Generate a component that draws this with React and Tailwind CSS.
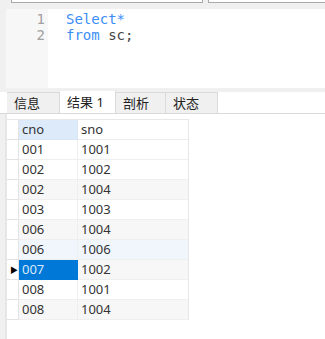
import React from "react";

const ROWS = [
  ["001", "1001"],
  ["002", "1002"],
  ["002", "1004"],
  ["003", "1003"],
  ["006", "1004"],
  ["006", "1006"],
  ["007", "1002"],
  ["008", "1001"],
  ["008", "1004"],
];

const TABS = [
  { label: "信息", width: "w-[53px]" },
  { label: "结果 1", width: "w-[56px]", active: true },
  { label: "剖析", width: "w-[50px]" },
  { label: "状态", width: "w-[52px]" },
];

function rowBg(index) {
  if (index === 5) return "bg-[#f1f6fc]";
  if (index > 0 && index % 2 === 0) return "bg-[#f7f7f7]";
  return "bg-white";
}

export default function App() {
  return (
    <div className="flex h-[339px] w-[325px] flex-col overflow-hidden bg-[#f0f0f0] font-['Noto_Sans','Noto_Sans_CJK_SC',sans-serif]">
      {/* toolbar remnants */}
      <div className="flex h-[9px] shrink-0 gap-[5px] pl-[11px]">
        <div className="h-[3px] w-[192px] border-x border-b border-[#a9a9a9] bg-white" />
        <div className="h-[3px] flex-1 border-l border-b border-[#a9a9a9] bg-white" />
      </div>

      {/* editor */}
      <div className="ml-[6px] flex h-[79px] shrink-0 font-['DejaVu_Sans_Mono',monospace] text-[14px] leading-[16px]">
        <div className="w-[42px] bg-[#f7f7f7] pt-[2px] pr-[3px] text-right text-[#a0a0a0]">
          <div>1</div>
          <div>2</div>
        </div>
        <div className="flex-1 bg-white pt-[2px] pl-[18px]">
          <div className="text-[#3a8ef6]">Select*</div>
          <div>
            <span className="text-[#3a8ef6]">from</span>
            <span className="text-[#444]"> sc;</span>
          </div>
        </div>
      </div>

      {/* result tabs */}
      <div className="mt-[4px] flex h-[22px] shrink-0 items-end border-b border-[#d9d9d9] bg-white pl-[7px]">
        {TABS.map((tab) => (
          <div
            key={tab.label}
            className={`${tab.width} flex items-center border-r border-[#dadada] pl-[7px] text-[13px] leading-none text-[#222] ${
              tab.active ? "h-[22px] bg-white" : "h-[21px] bg-[#f0f0f0] border-t"
            }`}
          >
            {tab.label}
          </div>
        ))}
      </div>

      {/* grid */}
      <div className="ml-[5px] flex-1 border-l-2 border-[#e6e6e6] bg-white pt-[5px]">
        <div className="w-[182px] border-t border-r border-[#e8e8e8] text-[13px] leading-none text-[#333]">
          <div className="flex h-[20px]">
            <div className="w-[12px] border-r border-b border-[#e3e3e3] bg-white" />
            <div className="flex w-[59px] items-center border-r border-b border-[#d9e5f2] bg-[#dceafa] pl-[3px]">cno</div>
            <div className="flex flex-1 items-center border-b border-[#ececec] pl-[3px]">sno</div>
          </div>
          {ROWS.map(([cno, sno], i) => {
            const selected = i === 6;
            return (
              <div key={i} className={`flex h-[20px] ${rowBg(i)}`}>
                <div className="flex w-[12px] items-center border-r border-b border-[#e3e3e3] bg-white pl-[3px] text-[8px] text-black">
                  {selected ? "▶" : ""}
                </div>
                <div
                  className={`flex w-[59px] items-center border-r border-b pl-[3px] ${
                    selected ? "border-[#0078d7] bg-[#0078d7] text-[#d8e8f8]" : "border-[#efefef]"
                  }`}
                >
                  {cno}
                </div>
                <div className="flex flex-1 items-center border-b border-[#efefef] pl-[3px]">{sno}</div>
              </div>
            );
          })}
        </div>
      </div>
    </div>
  );
}
